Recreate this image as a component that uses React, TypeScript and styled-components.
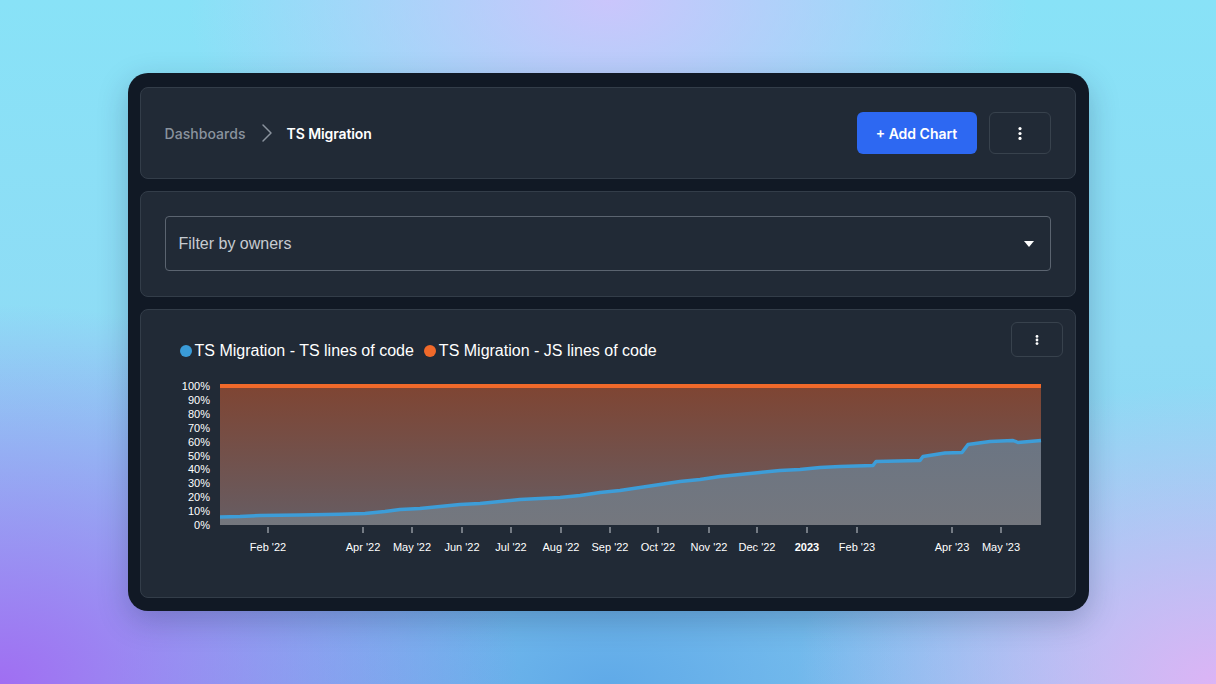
import React from "react";
import styled, { createGlobalStyle } from "styled-components";
import { ChevronRight } from "lucide-react";

const GlobalStyle = createGlobalStyle`
  html, body { margin: 0; padding: 0; }
  body {
    width: 1216px;
    height: 684px;
    overflow: hidden;
    font-family: Inter, "Liberation Sans", sans-serif;
    background:
      radial-gradient(ellipse 420px 260px at 50% 0%, rgba(206, 196, 252, 0.95), rgba(206, 196, 252, 0) 100%),
      radial-gradient(ellipse 520px 380px at 0% 100%, rgba(160, 110, 242, 1), rgba(160, 110, 242, 0) 100%),
      radial-gradient(ellipse 420px 300px at 100% 100%, rgba(220, 180, 245, 1), rgba(220, 180, 245, 0) 100%),
      radial-gradient(ellipse 500px 260px at 50% 100%, rgba(96, 170, 232, 1), rgba(96, 170, 232, 0) 100%),
      linear-gradient(180deg, #88e2f7 0%, #8fdcf5 50%, #8ccff2 100%);
  }
  #root { width: 100%; height: 100%; }
`;

const Page = styled.div`
  width: 100%;
  height: 100%;
  display: flex;
  align-items: center;
  justify-content: center;
`;

const Frame = styled.div`
  width: 961px;
  box-sizing: border-box;
  padding: 14px 13px 13px 12px;
  background: #111925;
  border-radius: 20px;
  display: flex;
  flex-direction: column;
  gap: 12px;
  box-shadow: 0 10px 30px rgba(20, 30, 70, 0.25);
`;

const Panel = styled.div<{ $pad: string }>`
  background: #212a36;
  border: 1px solid #333d49;
  border-radius: 8px;
  padding: ${(p) => p.$pad};
`;

const HeaderRow = styled.div`
  display: flex;
  align-items: center;
  justify-content: space-between;
`;

const Crumbs = styled.div`
  display: flex;
  align-items: center;
  font-size: 14px;
`;

const Crumb = styled.span<{ $active?: boolean }>`
  color: ${(p) => (p.$active ? "#ffffff" : "#8a939e")};
  font-weight: ${(p) => (p.$active ? 600 : 500)};
  letter-spacing: ${(p) => (p.$active ? "-0.1px" : "0.05px")};
`;

const Separator = styled(ChevronRight)`
  margin: 0 4px 0 5px;
`;

const Actions = styled.div`
  display: flex;
  align-items: center;
  gap: 12px;
`;

const PrimaryButton = styled.button`
  height: 42px;
  width: 120px;
  border: none;
  border-radius: 6px;
  background: #2d68f2;
  color: #ffffff;
  font-family: Inter, "Liberation Sans", sans-serif;
  font-size: 14px;
  font-weight: 600;
  display: flex;
  align-items: center;
  justify-content: center;
`;

const IconButton = styled.button<{ $w: number; $h: number }>`
  width: ${(p) => p.$w}px;
  height: ${(p) => p.$h}px;
  border: 1px solid #38424d;
  border-radius: 6px;
  background: transparent;
  display: flex;
  align-items: center;
  justify-content: center;
  padding: 0;
`;

const Select = styled.div`
  height: 55px;
  box-sizing: border-box;
  border: 1px solid #5b6470;
  border-radius: 4px;
  display: flex;
  align-items: center;
  justify-content: space-between;
  padding: 0 16px 0 13px;
  font-family: "Liberation Sans", Arial, sans-serif;
  font-size: 16px;
  color: #c6cbd1;
`;

const ChartTop = styled.div`
  display: flex;
  justify-content: space-between;
  align-items: flex-start;
`;

const Legend = styled.div`
  display: flex;
  align-items: center;
  gap: 10px;
  margin: 20px 0 0 27px;
  font-family: "Liberation Sans", Arial, sans-serif;
  font-size: 16px;
  color: #ffffff;
  line-height: 18px;
`;

const LegendItem = styled.div`
  display: flex;
  align-items: center;
  gap: 3px;
`;

const Dot = styled.span<{ $color: string }>`
  width: 12px;
  height: 12px;
  border-radius: 50%;
  background: ${(p) => p.$color};
`;

const ChartSvg = styled.svg`
  display: block;
  margin-top: 15px;
`;

const Dots = ({ size, r }: { size: number; r: number }) => (
  <svg width={4} height={size} viewBox={`0 0 4 ${size}`}>
    <circle cx={2} cy={r} r={r} fill="#fff" />
    <circle cx={2} cy={size / 2} r={r} fill="#fff" />
    <circle cx={2} cy={size - r} r={r} fill="#fff" />
  </svg>
);

const tsPoints: [number, number][] = [
  [220, 517], [240, 516.5], [260, 515.5], [300, 515], [340, 514.2], [365, 513.5], [385, 511.5],
  [400, 509.5], [420, 508.5], [440, 506.5], [460, 504.5], [480, 503.5], [500, 501.5],
  [520, 499.5], [540, 498.5], [560, 497.5], [580, 495.5], [600, 492.5], [620, 490.5],
  [640, 487.5], [660, 484.5], [680, 481.5], [700, 479.5], [720, 476.5], [740, 474.5],
  [760, 472.5], [780, 470.5], [800, 469.5], [820, 467.5], [840, 466.5], [873, 465.5],
  [876, 461.5], [920, 460.5], [923, 456.5], [945, 453], [962, 452.5], [968, 444.5],
  [990, 441.5], [1013, 440.5], [1018, 442.5], [1041, 440.5],
];

const yLabels = ["100%", "90%", "80%", "70%", "60%", "50%", "40%", "30%", "20%", "10%", "0%"];
const xTicks: { x: number; label: string; bold?: boolean }[] = [
  { x: 268, label: "Feb '22" },
  { x: 363, label: "Apr '22" },
  { x: 412, label: "May '22" },
  { x: 462, label: "Jun '22" },
  { x: 511, label: "Jul '22" },
  { x: 561, label: "Aug '22" },
  { x: 610, label: "Sep '22" },
  { x: 658, label: "Oct '22" },
  { x: 709, label: "Nov '22" },
  { x: 757, label: "Dec '22" },
  { x: 807, label: "2023", bold: true },
  { x: 857, label: "Feb '23" },
  { x: 952, label: "Apr '23" },
  { x: 1001, label: "May '23" },
];

const Chart = () => {
  const top = 386;
  const bottom = 525;
  const line = tsPoints.map((p) => p.join(",")).join(" ");
  const area = `220,${bottom} ${line} 1041,${bottom}`;
  return (
    <ChartSvg width={910} height={185} viewBox="153 375 910 185">
      <defs>
        <linearGradient id="orangeFill" x1="0" y1="0" x2="0" y2="1">
          <stop offset="0%" stopColor="#7f4533" />
          <stop offset="100%" stopColor="#665d63" />
        </linearGradient>
        <linearGradient id="grayFill" x1="0" y1="0" x2="0" y2="1">
          <stop offset="0%" stopColor="#6b7583" />
          <stop offset="100%" stopColor="#74777e" />
        </linearGradient>
      </defs>
      <rect x={220} y={top} width={821} height={bottom - top} fill="url(#orangeFill)" />
      <polygon points={area} fill="url(#grayFill)" />
      <line x1={220} y1={top} x2={1041} y2={top} stroke="#f0692a" strokeWidth={4} />
      <polyline points={line} fill="none" stroke="#3d9dd8" strokeWidth={3.5} strokeLinejoin="round" />
      {yLabels.map((l, i) => (
        <text
          key={l}
          x={210}
          y={top + i * ((bottom - top) / 10) + 4}
          textAnchor="end"
          fontFamily="'Liberation Sans', Arial, sans-serif"
          fontSize={11}
          fill="#ffffff"
        >
          {l}
        </text>
      ))}
      {xTicks.map((t) => (
        <g key={t.label}>
          <line x1={t.x} y1={527} x2={t.x} y2={533} stroke="#c8ccd2" strokeWidth={1} />
          <text
            x={t.x}
            y={551}
            textAnchor="middle"
            fontFamily="'Liberation Sans', Arial, sans-serif"
            fontSize={11}
            fontWeight={t.bold ? 700 : 400}
            fill="#ffffff"
          >
            {t.label}
          </text>
        </g>
      ))}
    </ChartSvg>
  );
};

export default function App() {
  return (
    <>
      <GlobalStyle />
      <Page>
        <Frame>
          <Panel $pad="24px 24px 24px 24px">
            <HeaderRow>
              <Crumbs>
                <Crumb>Dashboards</Crumb>
                <Separator size={32} color="#8a939e" strokeWidth={1.1} />
                <Crumb $active>TS Migration</Crumb>
              </Crumbs>
              <Actions>
                <PrimaryButton>+ Add Chart</PrimaryButton>
                <IconButton $w={62} $h={42}>
                  <Dots size={13} r={1.6} />
                </IconButton>
              </Actions>
            </HeaderRow>
          </Panel>
          <Panel $pad="24px 24px 25px 24px">
            <Select>
              <span>Filter by owners</span>
              <svg width={10} height={6} viewBox="0 0 10 6">
                <path d="M0 0 H10 L5 6 Z" fill="#ffffff" />
              </svg>
            </Select>
          </Panel>
          <Panel $pad="12px 12px 37px 12px">
            <ChartTop>
              <Legend>
                <LegendItem>
                  <Dot $color="#3a9bd8" />
                  TS Migration - TS lines of code
                </LegendItem>
                <LegendItem>
                  <Dot $color="#f0692a" />
                  TS Migration - JS lines of code
                </LegendItem>
              </Legend>
              <IconButton $w={52} $h={35}>
                <Dots size={10} r={1.4} />
              </IconButton>
            </ChartTop>
            <Chart />
          </Panel>
        </Frame>
      </Page>
    </>
  );
}
